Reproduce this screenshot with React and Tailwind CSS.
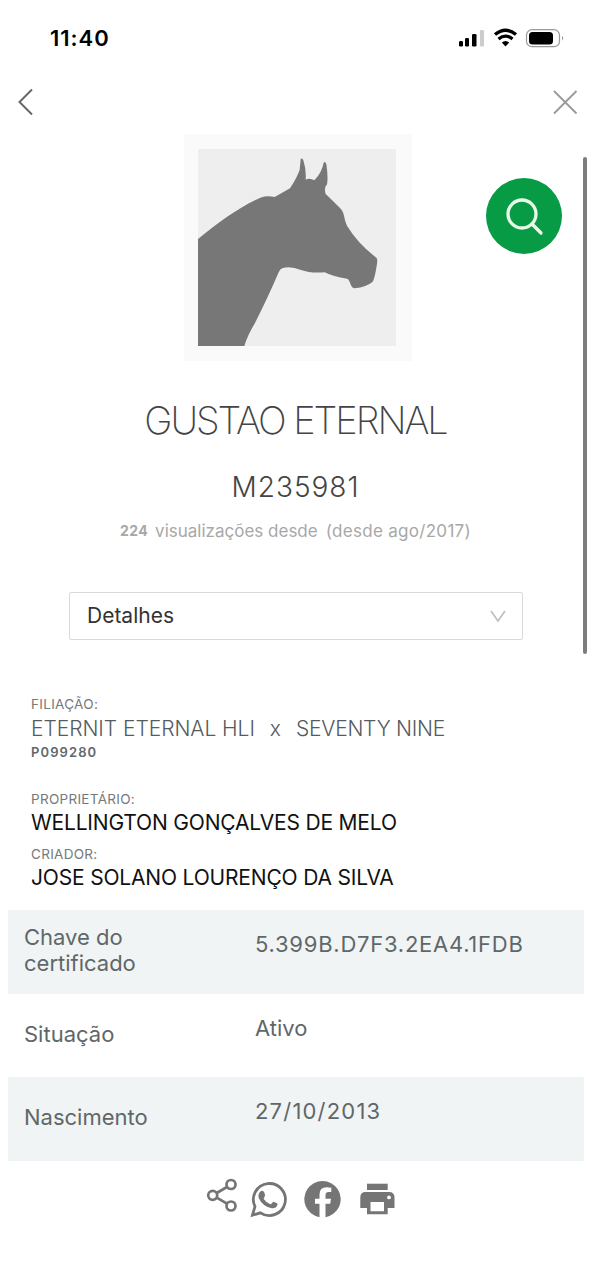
const details = [
    { label: "Chave do certificado", value: "5.399B.D7F3.2EA4.1FDB", spacing: "tracking-[0.75px]" },
    { label: "Situação", value: "Ativo", spacing: "tracking-normal" },
    { label: "Nascimento", value: "27/10/2013", spacing: "tracking-[1.2px]" }
];

function StatusBar() {
    return (
        <div className="flex h-[76px] items-center justify-between pl-[50px] pr-[26px]">
            <span className="text-[22px] font-semibold leading-6 tracking-[1px] text-black">11:40</span>
            <svg width="107" height="22" viewBox="458 27 107 22" fill="none">
                <rect x="459" y="41" width="4" height="5.5" rx="1.2" fill="#000" />
                <rect x="465" y="38" width="4" height="8.5" rx="1.2" fill="#000" />
                <rect x="472" y="34" width="4.5" height="12.5" rx="1.2" fill="#000" />
                <rect x="480" y="30" width="4" height="16.5" rx="1.2" fill="#ccc" />
                <path d="M495 34.5Q505.500 26 516 34.500" stroke="#000" strokeWidth="3.500" />
                <path d="M498.500 39Q505.500 33.300 512.500 39" stroke="#000" strokeWidth="3.200" />
                <path d="M501.800 42.600Q505.500 39.600 509.200 42.600L505.500 46.500Z" fill="#000" />
                <rect x="526.500" y="29.700" width="33" height="17" rx="5.500" stroke="#999" strokeWidth="1.200" />
                <rect x="529" y="32" width="24" height="12.500" rx="3.500" fill="#000" />
                <path d="M562 36Q564.500 38 562 40.500Z" fill="#999" />
            </svg>
        </div>
    );
}

function Horse() {
    return (
        <div className="ml-[184px] h-[227px] w-[228px] bg-[#fafafa] pl-[14px] pt-[15px]">
            <svg width="198" height="197" viewBox="53 57 594 591" className="bg-[#eee]">
                <path
                    fill="#777"
                    d="M53 327C115 276 180 229 240 203Q260 196 283 201Q307 188 329 175Q352 139 358 119L361 88Q365 82 369 91Q378 118 376 149Q388 143 402 151Q425 127 430 98Q434 93 438 102Q444 143 440 163Q430 174 436 192Q456 211 476 231Q489 243 491 257Q494 275 500 287Q532 340 589 384Q592 390 590 402Q583 447 577 455Q559 471 523 475Q514 473 510 461Q506 448 500 446Q458 440 433 427Q389 430 362 420Q331 407 307 414Q299 417 295 427Q264 500 224 579Q201 617 192 648H53Z"
                />
            </svg>
        </div>
    );
}

function Field({ label, children }) {
    return (
        <div>
            <p className="text-[13.5px] leading-[21px] tracking-[0.3px] text-[#75797a]">{label}</p>
            {children}
        </div>
    );
}

function Actions() {
    return (
        <footer className="flex pl-[204px] pt-[16px] text-[#757575]">
            <svg width="196" height="48" viewBox="204 1177 196 48" fill="none" stroke="currentColor">
                <g strokeWidth="2.700">
                    <circle cx="212.700" cy="1195.300" r="4.500" />
                    <circle cx="231" cy="1184.500" r="4.500" />
                    <circle cx="231" cy="1206" r="4.500" />
                    <path d="M216.700 1193L227 1187M216.700 1197.600L227 1203.700" />
                </g>
                <path strokeWidth="2.800" d="M252.500 1215.200L255 1206.500A16 16 0 1 1 260.500 1212.800Z" />
                <path
                    fill="currentColor"
                    stroke="none"
                    d="M261.300 1190.800Q263.600 1190.400 264.300 1192.500Q265.800 1195.700 264.500 1197Q263.300 1198.300 263.800 1199Q266 1202.700 270.300 1204.300Q271.200 1204.400 273 1201.900Q273.500 1201.400 277 1203.300Q278 1203.700 277.300 1205.200Q275.800 1209 270.800 1208Q262.500 1206 258.700 1198Q257.500 1193.500 261.300 1190.800Z"
                />
                <path
                    fill="currentColor"
                    stroke="none"
                    d="M319.500 1217.200A18.200 18.200 0 1 1 325.500 1217.200V1203.700H330.200L331 1198.700H325.500V1195.300Q325.500 1192 328.800 1192H331.300V1187.800Q319.500 1185.300 319.500 1194.500V1198.700H315V1203.700H319.500Z"
                />
                <g fill="currentColor" stroke="none">
                    <path d="M367 1183.700H387.700V1190H367Z" />
                    <path
                        fillRule="evenodd"
                        d="M365.500 1192H389Q394.500 1192 394.500 1197.500V1208H387.700V1214.300H367V1208H360.300V1197.500Q360.300 1192 365.500 1192ZM370.500 1202V1211.200H384V1202ZM389 1195.500A1.900 1.900 0 1 0 389 1199.300A1.900 1.900 0 1 0 389 1195.500Z"
                    />
                </g>
            </svg>
        </footer>
    );
}

export default function App() {
    return (
        <div className="relative h-[1280px] w-[591px] overflow-hidden bg-white font-['Inter',sans-serif]">
            <StatusBar />
            <header className="flex h-[58px] items-start justify-between pl-[16px] pr-[12px] pt-[11px]">
                <svg width="20" height="30" viewBox="0 0 20 30" fill="none" stroke="#666" strokeWidth="2">
                    <path d="M16 2.500L3.500 15L16 27.500" />
                </svg>
                <svg width="28" height="30" viewBox="0 0 28 30" fill="none" stroke="#999" strokeWidth="1.800">
                    <path d="M3 4L25.500 26.500M25.500 4L3 26.500" />
                </svg>
            </header>

            <Horse />
            <button className="absolute left-[486px] top-[178px] flex size-[76px] items-center justify-center rounded-full bg-[#089b45]">
                <svg width="40" height="40" viewBox="0 0 40 40" fill="none" stroke="#e9fbe8" strokeWidth="3.300">
                    <circle cx="18" cy="18" r="14" />
                    <path d="M28 28L37 37" strokeLinecap="round" />
                </svg>
            </button>
            <div className="absolute left-[583px] top-[157px] h-[497px] w-[4px] rounded-full bg-[#7d7d7d]" />

            <section className="flex flex-col items-center whitespace-nowrap">
                <h1 className="mt-[34px] text-[38px] font-extralight leading-[50px] tracking-[-2.05px] text-[#444]">
                    GUSTAO ETERNAL
                </h1>
                <p className="mt-[22px] text-[28px] font-light leading-[40px] tracking-[1px] text-[#444]">M235981</p>
                <p className="mt-[12px] flex items-center text-[17px] leading-[24px] text-[#a8a8a8]">
                    <b className="mr-[7px] text-[14px] font-bold tracking-[0.4px]">224</b>
                    <span className="mr-[8px]">visualizações desde</span>
                    <span className="tracking-[0.3px]">(desde ago/2017)</span>
                </p>
            </section>

            <div className="ml-[69px] mt-[49px] flex h-[48px] w-[454px] items-center justify-between rounded-[2px] border-[1.500px] border-[#d9d9d9] pl-[17px] pr-[16px]">
                <span className="text-[21px] leading-6 text-[#333]">Detalhes</span>
                <svg width="16" height="14" viewBox="0 0 16 14" fill="none" stroke="#bfbfbf" strokeWidth="1.700">
                    <path d="M1 2L8 12L15 2" />
                </svg>
            </div>

            <section className="whitespace-nowrap pl-[31px] pt-[54px]">
                <Field label="FILIAÇÃO:">
                    <p className="flex text-[21px] font-light leading-[28px] text-[#555b5e]">
                        <span className="tracking-[-0.05px]">ETERNIT ETERNAL HLI</span>
                        <span className="mx-[15px]">x</span>
                        <span className="tracking-[-0.25px]">SEVENTY NINE</span>
                    </p>
                    <p className="text-[13px] font-semibold leading-[19px] tracking-[1.1px] text-[#63676a]">P099280</p>
                </Field>
                <div className="mt-[27px]">
                    <Field label="PROPRIETÁRIO:">
                        <p className="text-[21px] leading-[26px] tracking-[-0.18px] text-[#111]">
                            WELLINGTON GONÇALVES DE MELO
                        </p>
                    </Field>
                </div>
                <div className="mt-[8px]">
                    <Field label="CRIADOR:">
                        <p className="text-[21px] leading-[26px] tracking-[-0.18px] text-[#111]">
                            JOSE SOLANO LOURENÇO DA SILVA
                        </p>
                    </Field>
                </div>
            </section>

            <dl className="ml-[8px] mt-[19px] w-[576px] text-[22px] text-[#5f6769]">
                {details.map((row) => (
                    <div key={row.label} className="flex h-[83.7px] odd:bg-[#f1f4f4]">
                        <dt className="flex w-[247px] items-center pb-[4px] pl-[16px] pr-[90px] leading-[26px]">
                            {row.label}
                        </dt>
                        <dd className={`pt-[20px] leading-[28px] ${row.spacing}`}>{row.value}</dd>
                    </div>
                ))}
            </dl>
            <Actions />
        </div>
    );
}
